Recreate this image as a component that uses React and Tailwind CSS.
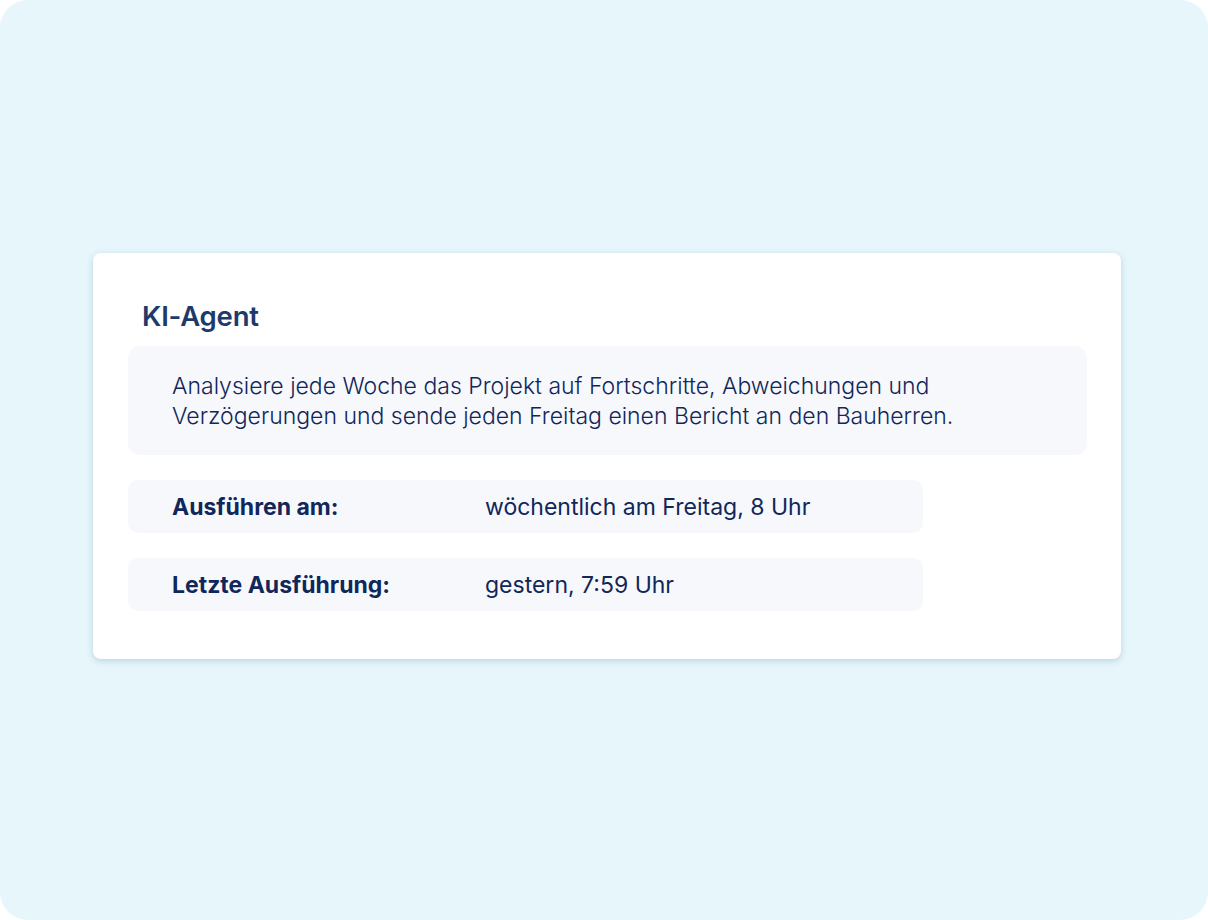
export default function App() {
  return (
    <div className="w-[1208px] h-[920px] bg-white" style={{ fontFamily: "Inter, 'Noto Sans', sans-serif" }}>
      <div className="w-full h-full rounded-[28px] bg-[#e6f6fb] flex items-start pt-[253px] pl-[93px]">
        <div className="w-[1028px] h-[406px] bg-white rounded-[8px] shadow-[0_2px_6px_rgba(60,110,140,0.25)] px-[35px] pt-[48px]">
          <div className="pl-[14px] h-[32px] flex items-center text-[27.5px] font-semibold text-[#1e3a6a] tracking-[-0.2px]">KI-Agent</div>
          <div className="mt-[13px] w-[959px] h-[109px] rounded-[12px] bg-[#f7f8fc] pl-[44px] pt-[25px] text-[23px] leading-[30px] font-light text-[#10275a] whitespace-nowrap">
            Analysiere jede Woche das Projekt auf Fortschritte, Abweichungen und<br />
            Verzögerungen und sende jeden Freitag einen Bericht an den Bauherren.
          </div>
          <div className="mt-[25px] flex flex-col gap-[25px]">
            <div className="w-[795px] h-[53px] rounded-[10px] bg-[#f7f8fc] flex items-center pl-[44px] pt-[2px] text-[23px] text-[#10275a]">
              <span className="w-[313px] font-bold">Ausführen am:</span>
              <span className="font-normal">wöchentlich am Freitag, 8 Uhr</span>
            </div>
            <div className="w-[795px] h-[53px] rounded-[10px] bg-[#f7f8fc] flex items-center pl-[44px] pt-[2px] text-[23px] text-[#10275a]">
              <span className="w-[313px] font-bold">Letzte Ausführung:</span>
              <span className="font-normal">gestern, 7:59 Uhr</span>
            </div>
          </div>
        </div>
      </div>
    </div>
  );
}
